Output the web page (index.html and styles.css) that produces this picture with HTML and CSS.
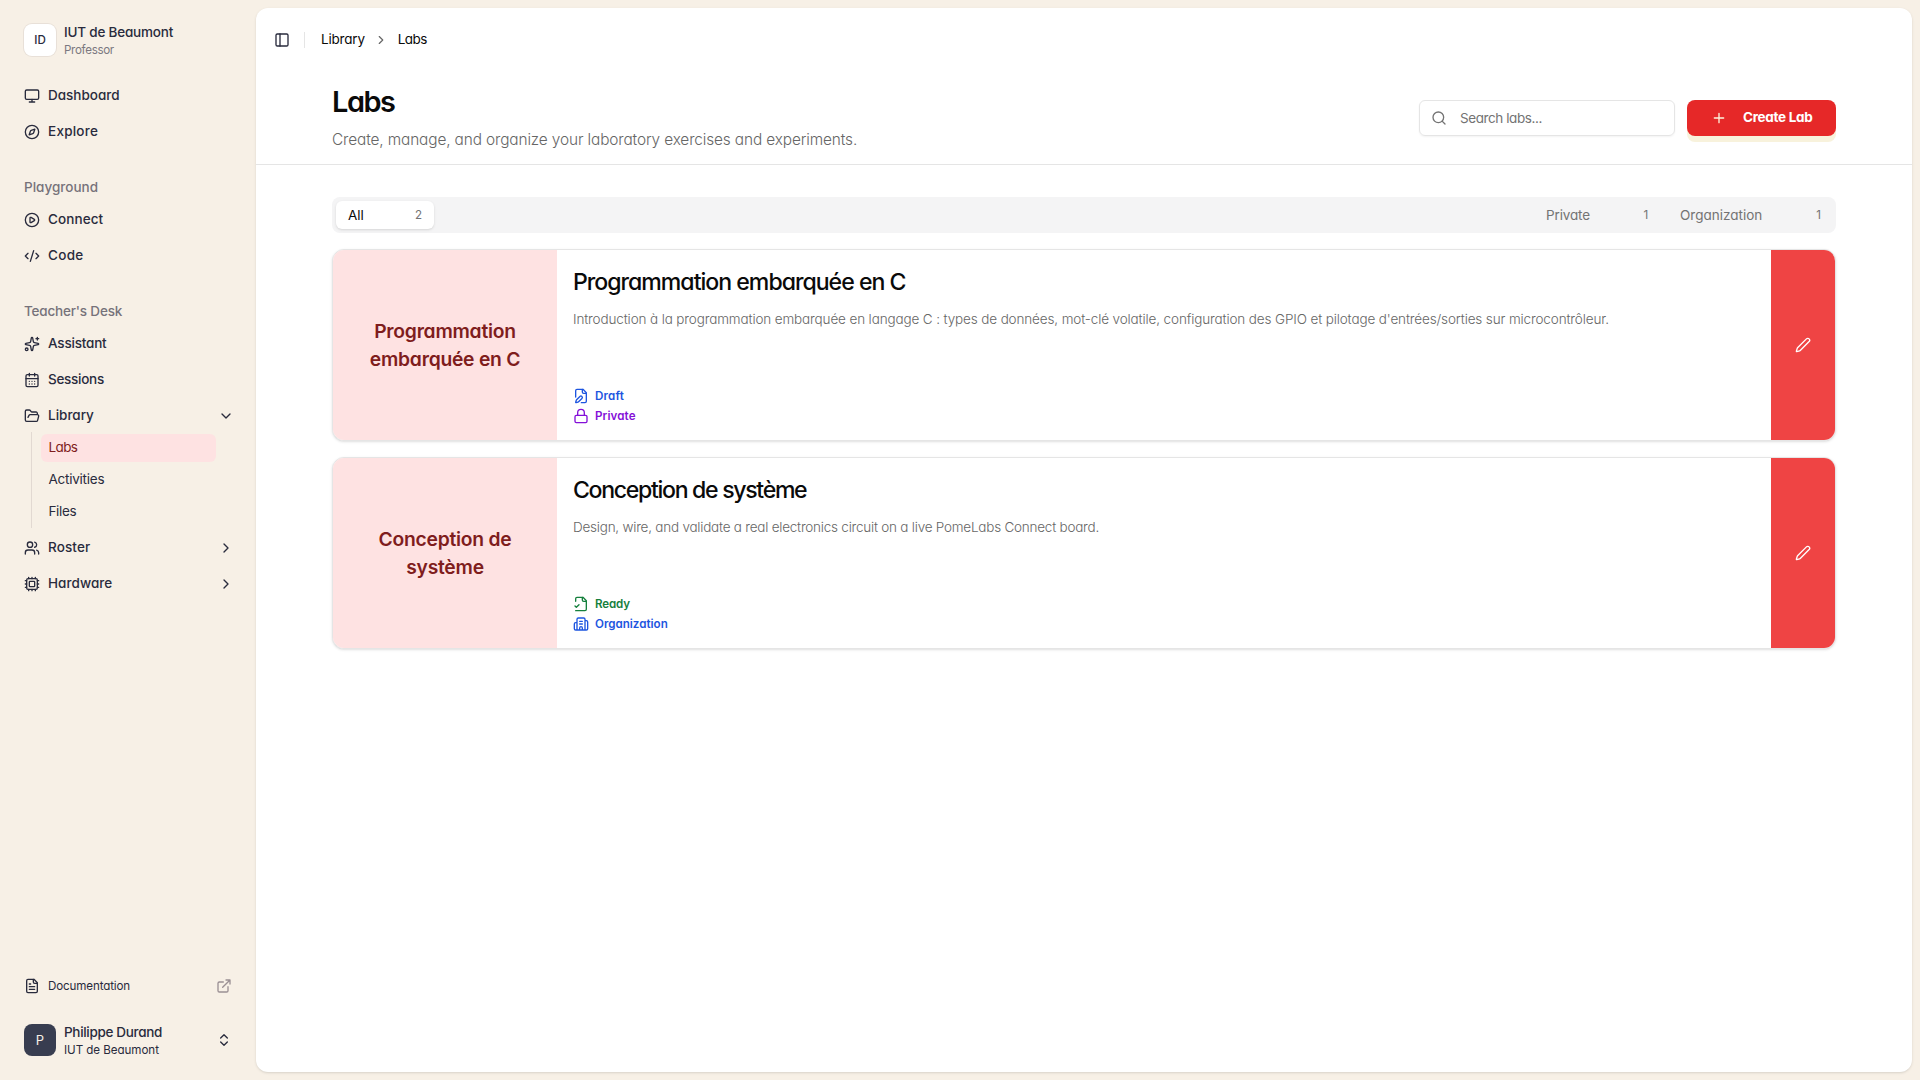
FILE: index.html
```html
<!DOCTYPE html>
<html lang="en">
<head>
<meta charset="utf-8">
<title>Labs</title>
<link rel="stylesheet" href="styles.css">
</head>
<body>
<aside class="sidebar">
  <div class="account">
    <div class="logo">ID</div>
    <div class="who"><span class="name org-name">IUT de Beaumont</span><span class="role">Professor</span></div>
  </div>

  <nav class="group">
    <a class="item dashboard"><svg class="icon" viewBox="0 0 24 24"><rect width="20" height="14" x="2" y="3" rx="2"/><path d="M8 21h8M12 17v4"/></svg><span>Dashboard</span></a>
    <a class="item explore"><svg class="icon" viewBox="0 0 24 24"><circle cx="12" cy="12" r="10"/><path d="m16.24 7.76-1.804 5.411a2 2 0 0 1-1.265 1.265L7.76 16.24l1.804-5.411a2 2 0 0 1 1.265-1.265z"/></svg><span>Explore</span></a>
  </nav>

  <div class="label">Playground</div>
  <nav class="group">
    <a class="item connect"><svg class="icon" viewBox="0 0 24 24"><circle cx="12" cy="12" r="10"/><path d="M9 9.003a1 1 0 0 1 1.517-.859l4.997 2.997a1 1 0 0 1 0 1.718l-4.997 2.997A1 1 0 0 1 9 14.996z"/></svg><span>Connect</span></a>
    <a class="item code"><svg class="icon" viewBox="0 0 24 24"><path d="m18 16 4-4-4-4M6 8l-4 4 4 4M14.5 4l-5 16"/></svg><span>Code</span></a>
  </nav>

  <div class="label desk">Teacher's Desk</div>
  <nav class="group">
    <a class="item assistant"><svg class="icon" viewBox="0 0 24 24"><path d="M11.017 2.814a1 1 0 0 1 1.966 0l1.051 5.558a2 2 0 0 0 1.594 1.594l5.558 1.051a1 1 0 0 1 0 1.966l-5.558 1.051a2 2 0 0 0-1.594 1.594l-1.051 5.558a1 1 0 0 1-1.966 0l-1.051-5.558a2 2 0 0 0-1.594-1.594l-5.558-1.051a1 1 0 0 1 0-1.966l5.558-1.051a2 2 0 0 0 1.594-1.594zM20 2v4M22 4h-4"/><circle cx="4" cy="20" r="2"/></svg><span>Assistant</span></a>
    <a class="item sessions"><svg class="icon" viewBox="0 0 24 24"><path d="M8 2v4M16 2v4M3 10h18M8 14h.01M12 14h.01M16 14h.01M8 18h.01M12 18h.01M16 18h.01"/><rect width="18" height="18" x="3" y="4" rx="2"/></svg><span>Sessions</span></a>
    <a class="item library"><svg class="icon" viewBox="0 0 24 24"><path d="m6 14 1.5-2.9A2 2 0 0 1 9.24 10H20a2 2 0 0 1 1.94 2.5l-1.54 6a2 2 0 0 1-1.95 1.5H4a2 2 0 0 1-2-2V5a2 2 0 0 1 2-2h3.9a2 2 0 0 1 1.69.9l.81 1.2a2 2 0 0 0 1.67.9H18a2 2 0 0 1 2 2v2"/></svg><span>Library</span><svg class="icon chev" viewBox="0 0 24 24"><path d="m6 9 6 6 6-6"/></svg></a>
    <div class="subnav">
      <a class="sub labs active"><span>Labs</span></a>
      <a class="sub activities"><span>Activities</span></a>
      <a class="sub files"><span>Files</span></a>
    </div>
    <a class="item roster"><svg class="icon" viewBox="0 0 24 24"><path d="M16 21v-2a4 4 0 0 0-4-4H6a4 4 0 0 0-4 4v2M16 3.128a4 4 0 0 1 0 7.744M22 21v-2a4 4 0 0 0-3-3.87"/><circle cx="9" cy="7" r="4"/></svg><span>Roster</span><svg class="icon chev" viewBox="0 0 24 24"><path d="m9 18 6-6-6-6"/></svg></a>
    <a class="item hardware"><svg class="icon" viewBox="0 0 24 24"><path d="M12 20v2M12 2v2M17 20v2M17 2v2M2 12h2M2 17h2M2 7h2M20 12h2M20 17h2M20 7h2M7 20v2M7 2v2"/><rect x="4" y="4" width="16" height="16" rx="2"/><rect x="8" y="8" width="8" height="8" rx="1"/></svg><span>Hardware</span><svg class="icon chev" viewBox="0 0 24 24"><path d="m9 18 6-6-6-6"/></svg></a>
  </nav>

  <div class="bottom">
    <a class="docs"><svg class="icon" viewBox="0 0 24 24"><path d="M15 2H6a2 2 0 0 0-2 2v16a2 2 0 0 0 2 2h12a2 2 0 0 0 2-2V7Z"/><path d="M14 2v4a2 2 0 0 0 2 2h4M10 9H8M16 13H8M16 17H8"/></svg><span>Documentation</span><svg class="icon end muted" viewBox="0 0 24 24"><path d="M15 3h6v6M10 14 21 3M18 13v6a2 2 0 0 1-2 2H5a2 2 0 0 1-2-2V8a2 2 0 0 1 2-2h6"/></svg></a>
    <div class="user">
      <div class="avatar">P</div>
      <div class="who"><span class="name user-name">Philippe Durand</span><span class="org">IUT de Beaumont</span></div>
      <svg class="icon end" viewBox="0 0 24 24"><path d="m7 15 5 5 5-5M7 9l5-5 5 5"/></svg>
    </div>
  </div>
</aside>

<main class="panel">
  <header class="topbar">
    <svg class="icon" viewBox="0 0 24 24"><rect width="18" height="18" x="3" y="3" rx="2"/><path d="M9 3v18"/></svg>
    <span class="divider"></span>
    <div class="crumbs"><span class="crumb">Library</span><svg class="icon" viewBox="0 0 24 24"><path d="m9 18 6-6-6-6"/></svg><span class="crumb current">Labs</span></div>
  </header>

  <section class="heading">
    <div class="intro">
      <h1>Labs</h1>
      <p>Create, manage, and organize your laboratory exercises and experiments.</p>
    </div>
    <div class="actions">
      <div class="search"><svg class="icon" viewBox="0 0 24 24"><circle cx="11" cy="11" r="8"/><path d="m21 21-4.34-4.34"/></svg><span>Search labs...</span></div>
      <button class="create"><svg class="icon" viewBox="0 0 24 24"><path d="M5 12h14M12 5v14"/></svg><span>Create Lab</span></button>
    </div>
  </section>

  <section class="content">
    <div class="tabs">
      <div class="tab all selected"><span>All</span><span class="count">2</span></div>
      <div class="tab private"><span>Private</span><span class="count">1</span></div>
      <div class="tab organization"><span>Organization</span><span class="count">1</span></div>
    </div>

    <article class="card">
      <div class="cover">Programmation<br>embarquée en C</div>
      <div class="body">
        <h2 class="title-c">Programmation embarquée en C</h2>
        <p class="text-c">Introduction à la programmation embarquée en langage C : types de données, mot-clé volatile, configuration des GPIO et pilotage d'entrées/sorties sur microcontrôleur.</p>
        <div class="badges">
          <div class="badge draft"><svg class="icon" viewBox="0 0 24 24"><path d="M12.5 22H18a2 2 0 0 0 2-2V7l-5-5H6a2 2 0 0 0-2 2v9.5"/><path d="M14 2v4a2 2 0 0 0 2 2h4M13.378 15.626a1 1 0 1 0-3.004-3.004l-5.01 5.012a2 2 0 0 0-.506.854l-.837 2.87a.5.5 0 0 0 .62.62l2.87-.837a2 2 0 0 0 .854-.506z"/></svg><span>Draft</span></div>
          <div class="badge locked"><svg class="icon" viewBox="0 0 24 24"><rect width="18" height="11" x="3" y="11" rx="2"/><path d="M7 11V7a5 5 0 0 1 10 0v4"/></svg><span>Private</span></div>
        </div>
      </div>
      <div class="edit"><svg class="icon" viewBox="0 0 24 24"><path d="M21.174 6.812a1 1 0 0 0-3.986-3.987L3.842 16.174a2 2 0 0 0-.5.83l-1.321 4.352a.5.5 0 0 0 .623.622l4.353-1.32a2 2 0 0 0 .83-.497z"/></svg></div>
    </article>

    <article class="card">
      <div class="cover">Conception de<br>système</div>
      <div class="body">
        <h2 class="title-s">Conception de système</h2>
        <p class="text-s">Design, wire, and validate a real electronics circuit on a live PomeLabs Connect board.</p>
        <div class="badges">
          <div class="badge ready"><svg class="icon" viewBox="0 0 24 24"><path d="M4 22h14a2 2 0 0 0 2-2V7l-5-5H6a2 2 0 0 0-2 2v4"/><path d="M14 2v4a2 2 0 0 0 2 2h4M3 15l2 2 4-4"/></svg><span>Ready</span></div>
          <div class="badge shared"><svg class="icon" viewBox="0 0 24 24"><path d="M10 12h4M10 8h4M14 21v-3a2 2 0 0 0-4 0v3M6 10H4a2 2 0 0 0-2 2v7a2 2 0 0 0 2 2h16a2 2 0 0 0 2-2V9a2 2 0 0 0-2-2h-2M6 21V5a2 2 0 0 1 2-2h8a2 2 0 0 1 2 2v16"/></svg><span>Organization</span></div>
        </div>
      </div>
      <div class="edit"><svg class="icon" viewBox="0 0 24 24"><path d="M21.174 6.812a1 1 0 0 0-3.986-3.987L3.842 16.174a2 2 0 0 0-.5.83l-1.321 4.352a.5.5 0 0 0 .623.622l4.353-1.32a2 2 0 0 0 .83-.497z"/></svg></div>
    </article>
  </section>
</main>
</body>
</html>
```
FILE: styles.css
```css
* { box-sizing: border-box; }
h1, h2, p { margin: 0; }

body {
  margin: 0;
  height: 1080px;
  overflow: hidden;
  display: flex;
  background: #f7f0e6;
  color: #0a0a0a;
  font-family: Inter, sans-serif;
  font-feature-settings: "cv11";
  font-size: 13.5px;
  line-height: 20px;
}

.icon {
  width: 16px;
  height: 16px;
  flex: none;
  fill: none;
  stroke: currentColor;
  stroke-width: 2;
  stroke-linecap: round;
  stroke-linejoin: round;
}

/* Sidebar */
.sidebar {
  width: 256px;
  flex: none;
  display: flex;
  flex-direction: column;
  padding: 16px;
  color: #292b3d;
}
.account, .user { display: flex; align-items: center; gap: 8px; height: 48px; padding: 0 8px; }
.logo, .avatar {
  width: 32px;
  height: 32px;
  flex: none;
  display: flex;
  align-items: center;
  justify-content: center;
  border-radius: 8px;
  padding-bottom: 1px;
}
.logo { background: #fff; font-weight: 500; font-size: 11.6px; box-shadow: 0 0 0 1px #e8e0d8; }
.avatar { background: #383d50; color: #f7f0e6; font-size: 13px; }
.who { display: flex; flex-direction: column; line-height: 18px; padding-top: 1px; }
.name { font-weight: 500; }
.org-name { letter-spacing: -.2px; }
.user-name { font-weight: 550; letter-spacing: -.32px; }
.role, .org { font-size: 11.6px; }
.role { color: #7b7880; letter-spacing: -.32px; }
.org { letter-spacing: -.05px; }

.group { display: flex; flex-direction: column; gap: 4px; }
.account + .group { margin-top: 16px; }
.item { height: 32px; display: flex; align-items: center; gap: 8px; padding: 0 6px 0 8px; font-weight: 550; }
.item span, .sub span { padding-bottom: 2px; }
.chev { margin-left: auto; }
.label {
  height: 32px;
  margin-top: 24px;
  padding: 5px 8px 7px;
  font-weight: 500;
  color: #76727a;
}
.desk { letter-spacing: -.18px; }
.explore { letter-spacing: .24px; }
.connect { letter-spacing: .09px; }
.code { letter-spacing: .3px; }
.assistant { letter-spacing: -.2px; }
.sessions { letter-spacing: -.28px; }
.roster { letter-spacing: .12px; }
.hardware { letter-spacing: .05px; }

.subnav {
  margin: -4px 24px 0 15px;
  padding: 2px 0 2px 9px;
  border-left: 1px solid #e2d9d2;
  display: flex;
  flex-direction: column;
  gap: 4px;
}
.sub { height: 28px; display: flex; align-items: center; padding: 0 8px 0 7.5px; border-radius: 6px; }
.sub.active { background: #fee2e2; color: #7f1d1d; }
.labs { letter-spacing: -.6px; }
.activities { letter-spacing: -.25px; }
.files { letter-spacing: -.35px; }

.bottom { margin-top: auto; }
.docs { height: 32px; margin-bottom: 14px; display: flex; align-items: center; gap: 8px; padding: 0 8px; font-size: 11.6px; letter-spacing: -.13px; }
.end { margin-left: auto; }
.muted { color: #9b9094; }

/* Main panel */
.panel {
  flex: 1;
  margin: 8px 8px 8px 0;
  background: #fff;
  border-radius: 12px;
  box-shadow: 0 1px 3px rgba(0, 0, 0, .1), 0 1px 2px -1px rgba(0, 0, 0, .1);
}
.topbar { height: 64px; display: flex; align-items: center; padding: 0 18px; }
.topbar > .icon { color: #292b3d; }
.divider { width: 1px; height: 16px; margin: 0 16px 0 14px; background: #e5e5e5; }
.crumbs { display: flex; align-items: center; gap: 9.5px; }
.crumbs .icon { width: 14px; height: 14px; color: #666; }
.crumb { letter-spacing: -.2px; padding-bottom: 2px; }
.crumb.current { letter-spacing: -.55px; }

.heading {
  height: 93px;
  display: flex;
  justify-content: space-between;
  padding: 0 76px;
  border-bottom: 1px solid #e5e5e5;
}
h1 { font-size: 28.9px; line-height: 36px; font-weight: 620; letter-spacing: -1.45px; margin-top: 12px; }
.intro p { font-size: 15.4px; line-height: 24px; font-weight: 300; letter-spacing: -.125px; color: #666; margin-top: 8px; }
.actions { display: flex; gap: 12px; padding-top: 28px; }
.search {
  width: 256px;
  height: 36px;
  display: flex;
  align-items: center;
  gap: 13px;
  padding: 0 11px;
  border: 1px solid #e5e5e5;
  border-radius: 6px;
  box-shadow: 0 1px 2px rgba(0, 0, 0, .05);
  color: #737373;
  letter-spacing: -.42px;
}
.create {
  width: 149px;
  height: 36px;
  display: flex;
  align-items: center;
  gap: 16px;
  padding: 0 24px;
  border: 0;
  border-radius: 8px;
  background: #e62828;
  color: #fdf3dc;
  font: inherit;
  font-feature-settings: inherit;
  font-weight: 650;
  letter-spacing: -.29px;
  box-shadow: 0 6px 0 #f8f2dc;
  white-space: nowrap;
}
.create span { color: #fff; padding-bottom: 2px; }

.content { padding: 32px 76px; display: flex; flex-direction: column; gap: 16px; }
.tabs { height: 36px; display: flex; align-items: center; padding: 4px; border-radius: 8px; background: #f4f4f5; color: #737373; }
.tab { height: 28px; display: flex; align-items: center; justify-content: space-between; padding: 0 12px 1px; border-radius: 6px; }
.selected { width: 98px; margin-right: auto; background: #fff; color: #0a0a0a; box-shadow: 0 1px 3px rgba(0, 0, 0, .1), 0 1px 2px -1px rgba(0, 0, 0, .1); }
.private { width: 126px; margin-right: 8px; letter-spacing: -.13px; }
.organization { width: 164px; padding-right: 11px; }
.count { font-size: 11.6px; color: #737373; }

.card {
  height: 192px;
  display: flex;
  overflow: hidden;
  background: #fff;
  border: 1px solid #e5e5e5;
  border-radius: 12px;
  box-shadow: 0 1px 3px rgba(0, 0, 0, .1), 0 1px 2px -1px rgba(0, 0, 0, .1);
}
.cover {
  width: 224px;
  flex: none;
  display: flex;
  align-items: center;
  justify-content: center;
  text-align: center;
  background: #fee2e2;
  color: #7f1d1d;
  font-size: 19.3px;
  line-height: 28px;
  font-weight: 600;
  letter-spacing: -.25px;
}
.body { flex: 1; display: flex; flex-direction: column; padding: 16px; }
h2 { font-size: 23.1px; line-height: 32px; font-weight: 550; }
.title-c { letter-spacing: -1px; }
.title-s { letter-spacing: -1.32px; }
.body p { font-weight: 300; color: #666; margin-top: 11px; }
.text-c { letter-spacing: -.131px; }
.text-s { letter-spacing: -.229px; }
.badges { margin-top: auto; display: flex; flex-direction: column; gap: 4px; }
.badge { height: 16px; display: flex; align-items: center; gap: 6px; font-size: 11.6px; line-height: 16px; font-weight: 560; }
.draft { color: #1d55e0; letter-spacing: .2px; }
.locked { color: #8410d8; letter-spacing: .1px; }
.ready { color: #15803d; letter-spacing: -.15px; }
.shared { color: #1d55e0; }
.edit { width: 64px; flex: none; display: flex; align-items: center; justify-content: center; background: #ef4444; color: #fff; }
```
